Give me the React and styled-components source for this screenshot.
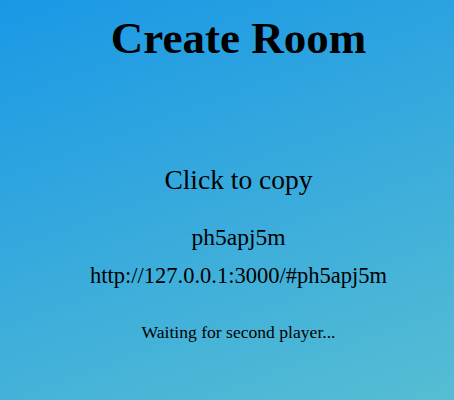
import React from "react"
import styled, { createGlobalStyle } from "styled-components"

const GlobalStyle = createGlobalStyle`
  html, body {
    margin: 0;
    padding: 0;
    height: 100%;
  }
  body {
    font-family: "Liberation Serif", "Times New Roman", serif;
    color: #000;
  }
  #root {
    height: 100%;
  }
`

const Page = styled.div`
  width: 100%;
  min-height: 400px;
  box-sizing: border-box;
  padding-left: 23px;
  background: linear-gradient(160deg, #1a98e6 0%, #56bdd3 100%);
  display: flex;
  flex-direction: column;
  align-items: center;
  text-align: center;
`

const Title = styled.h1`
  margin: 12px 0 0;
  font-size: 45px;
  line-height: 52px;
  font-weight: bold;
`

const CopyBox = styled.div`
  margin-top: 100px;
  display: flex;
  flex-direction: column;
  align-items: center;
  cursor: pointer;
`

const CopyLabel = styled.div`
  font-size: 27.5px;
  line-height: 32px;
`

const Code = styled.div`
  margin-top: 27px;
  font-size: 23.5px;
  line-height: 28px;
`

const Link = styled.div`
  margin-top: 11px;
  font-size: 22.5px;
  line-height: 28px;
`

const Status = styled.p`
  margin: 32px 0 0;
  font-size: 17.6px;
  line-height: 20px;
`

export default function App() {
  const room = "ph5apj5m"
  return (
    <>
      <GlobalStyle />
      <Page>
        <Title>Create Room</Title>
        <CopyBox>
          <CopyLabel>Click to copy</CopyLabel>
          <Code>{room}</Code>
          <Link>http://127.0.0.1:3000/#{room}</Link>
        </CopyBox>
        <Status>Waiting for second player...</Status>
      </Page>
    </>
  )
}
